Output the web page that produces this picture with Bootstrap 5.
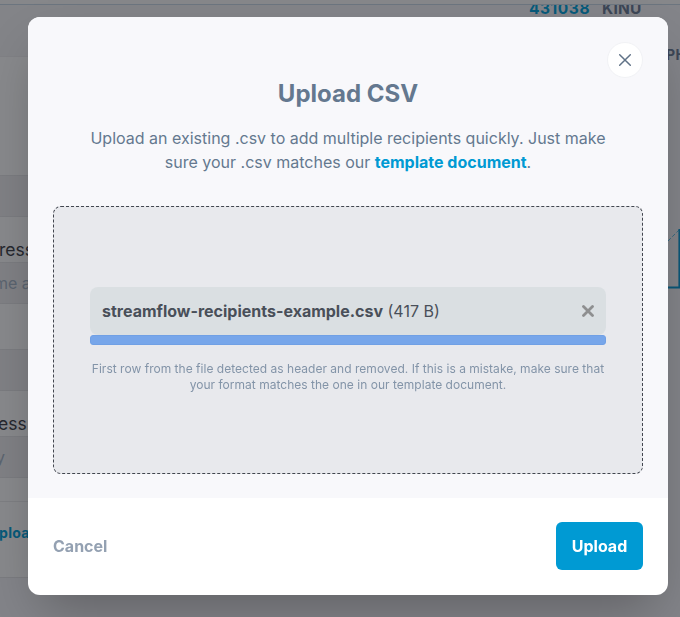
<!DOCTYPE html>
<html lang="en">
<head>
<meta charset="utf-8">
<meta name="viewport" content="width=device-width, initial-scale=1">
<title>Upload CSV</title>
<link href="https://cdn.jsdelivr.net/npm/bootstrap@5.3.0/dist/css/bootstrap.min.css" rel="stylesheet">
<style>
  html, body { height: 617px; overflow: hidden; }
  body { font-family: Inter, sans-serif; background: #838489; color: #64788f; }
  /* dimmed page behind the dialog */
  .backpage { height: 617px; }
  .topbar { height: 5px; background: #86878a; border-bottom: 1px solid #6c757f; }
  .stage { height: 612px; }
  .side { width: 300px; }
  .side > div { flex: none; white-space: nowrap; overflow: hidden; }
  .s-head { height: 51px; background: #838488; }
  .s-line { border-top: 1px solid #808185; }
  .s-pane { background: #88898c; }
  .s-field { height: 42px; background: #808185; border-top: 1px solid #7b7c80; border-bottom: 1px solid #7b7c80; color: #5b6470; font-size: 16px; line-height: 40px; }
  .s-label { height: 46px; background: #88898c; color: #26282f; font-size: 17.5px; line-height: 24px; padding-top: 21px; text-indent: -1px; }
  .s-cut1 { text-indent: -6px; }
  .s-cut2 { text-indent: -2px; }
  .s-cut3 { text-indent: -4px; }
  .s-link { height: 77px; background: #88898c; border-top: 1px solid #7e7f83; border-bottom: 1px solid #7b7c80; color: #075a7a; font-size: 14px; font-weight: 700; line-height: 62px; letter-spacing: .3px; text-indent: -1px; }
  .feed { width: 380px; }
  .h-amount { height: 13px; overflow: hidden; padding-left: 229px; font-size: 15.5px; font-weight: 700; line-height: 20px; color: #3c4656; gap: 12px; }
  .h-amount span { margin-top: -6px; letter-spacing: .25px; }
  .h-amount .num { color: #075a7a; letter-spacing: .55px; }
  .h-col { height: 24px; margin-top: 25px; padding-left: 366px; font-size: 14px; font-weight: 700; line-height: 24px; color: #3c4656; white-space: nowrap; letter-spacing: .5px; overflow: hidden; }
  .chart { width: 12px; height: 64px; margin-top: 162px; }
  /* dialog */
  .sheet-dialog { width: 640px; max-width: none; margin: 17px 12px 0 28px; }
  .sheet { height: 578px; border: 0; border-radius: 12px; overflow: hidden; background: #fff; }
  .sheet-wrap { border-radius: 12px; box-shadow: 0 25px 50px -12px rgba(0,0,0,.27); }
  .sheet-top { height: 481px; padding: 25px 25px 24px; background: #f8f8fb; flex: none; }
  .x-round { width: 36px; height: 36px; border: 1px solid #f1f2f5; }
  .ttl { font-size: 24px; line-height: 32px; color: #64788f; }
  .intro { font-size: 16px; line-height: 24px; margin-top: 16px; }
  .intro a { color: #009ad3; }
  .dropzone { height: 268px; margin-top: 32px; padding: 0 36px; background: #e8e9ed; border: 1px dashed #42464f; border-radius: 8px; }
  .file-chip { height: 48px; padding: 0 12px; background: #dadfe2; border-radius: 8px; color: #494f59; font-size: 16px; }
  .file-bar { height: 10px; border-radius: 3px; background: #77a6ea; border: 1px solid #70a0e5; }
  .hint { font-size: 12px; line-height: 16px; margin: 16px -4px 0; color: #8394a8; letter-spacing: .02px; }
  .sheet-foot { height: 97px; padding: 0 25px 2px; }
  .btn-plain { color: #94a1b2; padding: 0; border: 0; }
  .btn-send { width: 87px; height: 48px; background: #009ad3; border-radius: 6px; padding: 0; }
</style>
</head>
<body>
<div class="backpage">
  <div class="topbar"></div>
  <div class="stage d-flex">
    <div class="side d-flex flex-column">
      <div class="s-head"></div>
      <div class="s-pane s-line" style="height:119px"></div>
      <div class="s-field"></div>
      <div class="s-label">ress</div>
      <div class="s-field s-cut1" style="margin-top:-1px">me a</div>
      <div class="s-pane" style="height:45px"></div>
      <div class="s-field"></div>
      <div class="s-label s-cut2">ess</div>
      <div class="s-field s-cut3" style="margin-top:-1px">y</div>
      <div class="s-pane" style="height:23px"></div>
      <div class="s-link">ploa</div>
    </div>
    <div class="feed">
      <div class="h-amount d-flex"><span class="num">431038</span><span>KINU</span></div>
      <div class="h-col">PH</div>
      <svg class="chart d-block ms-auto" viewBox="0 0 12 64"><path d="M0 12 12 0" stroke="#376a80" stroke-dasharray="4 2" fill="none"/><path d="M11.4 0V58.5M0 58.5H12" stroke="#0a5778" stroke-width="2" fill="none"/></svg>
    </div>
  </div>
</div>

<div class="modal d-block overflow-hidden" tabindex="-1" role="dialog" aria-labelledby="dlgTitle">
  <div class="modal-dialog sheet-dialog">
    <div class="sheet-wrap">
      <div class="modal-content sheet">
        <div class="sheet-top">
          <div class="d-flex justify-content-end">
            <button type="button" class="x-round btn bg-white rounded-circle p-0 d-flex align-items-center justify-content-center" aria-label="Close">
              <svg width="14" height="14" viewBox="0 0 14 14"><path d="M1.7 1.7 12.3 12.3M12.3 1.7 1.7 12.3" stroke="#607287" stroke-width="1.5" stroke-linecap="round"/></svg>
            </button>
          </div>
          <h2 class="ttl fw-bold text-center mb-0" id="dlgTitle">Upload CSV</h2>
          <p class="intro text-center mb-0">Upload an existing .csv to add multiple recipients quickly. Just make<br>sure your .csv matches our <a href="#" class="fw-bold text-decoration-none">template document</a>.</p>
          <div class="dropzone d-flex flex-column justify-content-center">
            <div class="file-chip d-flex align-items-center justify-content-between">
              <span><strong>streamflow-recipients-example.csv</strong> (417 B)</span>
              <svg width="12" height="12" viewBox="0 0 12 12"><path d="M1.5 1.5 10.5 10.5M10.5 1.5 1.5 10.5" stroke="#8e8f90" stroke-width="2.8" stroke-linecap="round"/></svg>
            </div>
            <div class="file-bar"></div>
            <p class="hint text-center mb-0">First row from the file detected as header and removed. If this is a mistake, make sure that<br>your format matches the one in our template document.</p>
          </div>
        </div>
        <div class="sheet-foot d-flex align-items-center justify-content-between">
          <button type="button" class="btn btn-plain fw-bold">Cancel</button>
          <button type="button" class="btn btn-send fw-bold text-white">Upload</button>
        </div>
      </div>
    </div>
  </div>
</div>
<script src="https://cdn.jsdelivr.net/npm/bootstrap@5.3.0/dist/js/bootstrap.bundle.min.js"></script>
</body>
</html>
